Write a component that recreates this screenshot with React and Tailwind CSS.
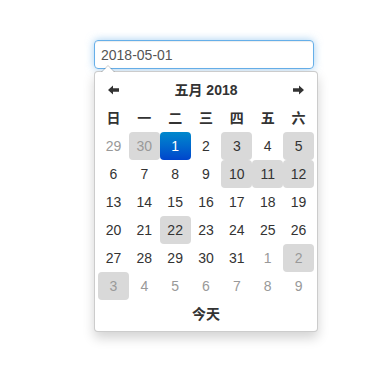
import React from "react";

const weekdays = ["日", "一", "二", "三", "四", "五", "六"];

// kind: "old" muted, "hl" highlighted grey, "active" selected
const weeks = [
  [["29", "old"], ["30", "old hl"], ["1", "active"], ["2"], ["3", "hl"], ["4"], ["5", "hl"]],
  [["6"], ["7"], ["8"], ["9"], ["10", "hl"], ["11", "hl"], ["12", "hl"]],
  [["13"], ["14"], ["15"], ["16"], ["17"], ["18"], ["19"]],
  [["20"], ["21"], ["22", "hl"], ["23"], ["24"], ["25"], ["26"]],
  [["27"], ["28"], ["29"], ["30"], ["31"], ["1", "old"], ["2", "old hl"]],
  [["3", "old hl"], ["4", "old"], ["5", "old"], ["6", "old"], ["7", "old"], ["8", "old"], ["9", "old"]],
];

function Arrow({ dir }) {
  return (
    <svg width="11" height="10" viewBox="0 0 11 10" className={dir === "right" ? "rotate-180" : ""}>
      <path d="M0 5 L5 0.5 L5 3.3 L11 3.3 L11 6.7 L5 6.7 L5 9.5 Z" fill="#333" />
    </svg>
  );
}

function Day({ label, kind = "" }) {
  let cls = "text-[#333]";
  if (kind.includes("old")) cls = "text-[#999]";
  if (kind.includes("hl")) cls += " bg-[#d9d9d9]";
  if (kind === "active") cls = "text-white bg-gradient-to-b from-[#0088cc] to-[#0044cc]";
  return (
    <div className={`h-[28px] flex items-center justify-center rounded-[4px] ${cls}`}>{label}</div>
  );
}

export default function App() {
  return (
    <div
      className="min-h-screen bg-white pt-[40px] pl-[94px] text-[14px]"
      style={{ fontFamily: '"Liberation Sans", Arial, "Noto Sans CJK SC", sans-serif' }}
    >
      <input
        readOnly
        value="2018-05-01"
        className="block w-[220px] h-[29px] px-[6px] border border-[#66afe9] rounded-[4px] text-[#555] text-[14px] outline-none shadow-[inset_0_1px_1px_rgba(0,0,0,0.075),0_0_8px_rgba(102,175,233,0.6)]"
      />
      <div className="relative mt-[2px] w-[224px] bg-white border border-[rgba(0,0,0,0.2)] rounded-[4px] shadow-[0_6px_12px_rgba(0,0,0,0.175)] pt-[4px] pb-[3px] px-[3px]">
        <div className="absolute -top-[7px] left-[6px] w-0 h-0 border-l-[7px] border-r-[7px] border-b-[7px] border-l-transparent border-r-transparent border-b-[rgba(0,0,0,0.2)]" />
        <div className="absolute -top-[6px] left-[7px] w-0 h-0 border-l-[6px] border-r-[6px] border-b-[6px] border-l-transparent border-r-transparent border-b-white" />
        <div className="grid grid-cols-7">
          <div className="h-[28px] flex items-center justify-center">
            <Arrow dir="left" />
          </div>
          <div className="col-span-5 h-[28px] flex items-center justify-center font-bold text-[#333]">
            五月 2018
          </div>
          <div className="h-[28px] flex items-center justify-center">
            <Arrow dir="right" />
          </div>
          {weekdays.map((w) => (
            <div key={w} className="h-[28px] flex items-center justify-center font-bold text-[#333]">
              {w}
            </div>
          ))}
          {weeks.map((week, i) =>
            week.map(([label, kind], j) => <Day key={`${i}-${j}`} label={label} kind={kind} />)
          )}
          <div className="col-span-7 h-[28px] flex items-center justify-center font-bold text-[#333]">
            今天
          </div>
        </div>
      </div>
    </div>
  );
}
